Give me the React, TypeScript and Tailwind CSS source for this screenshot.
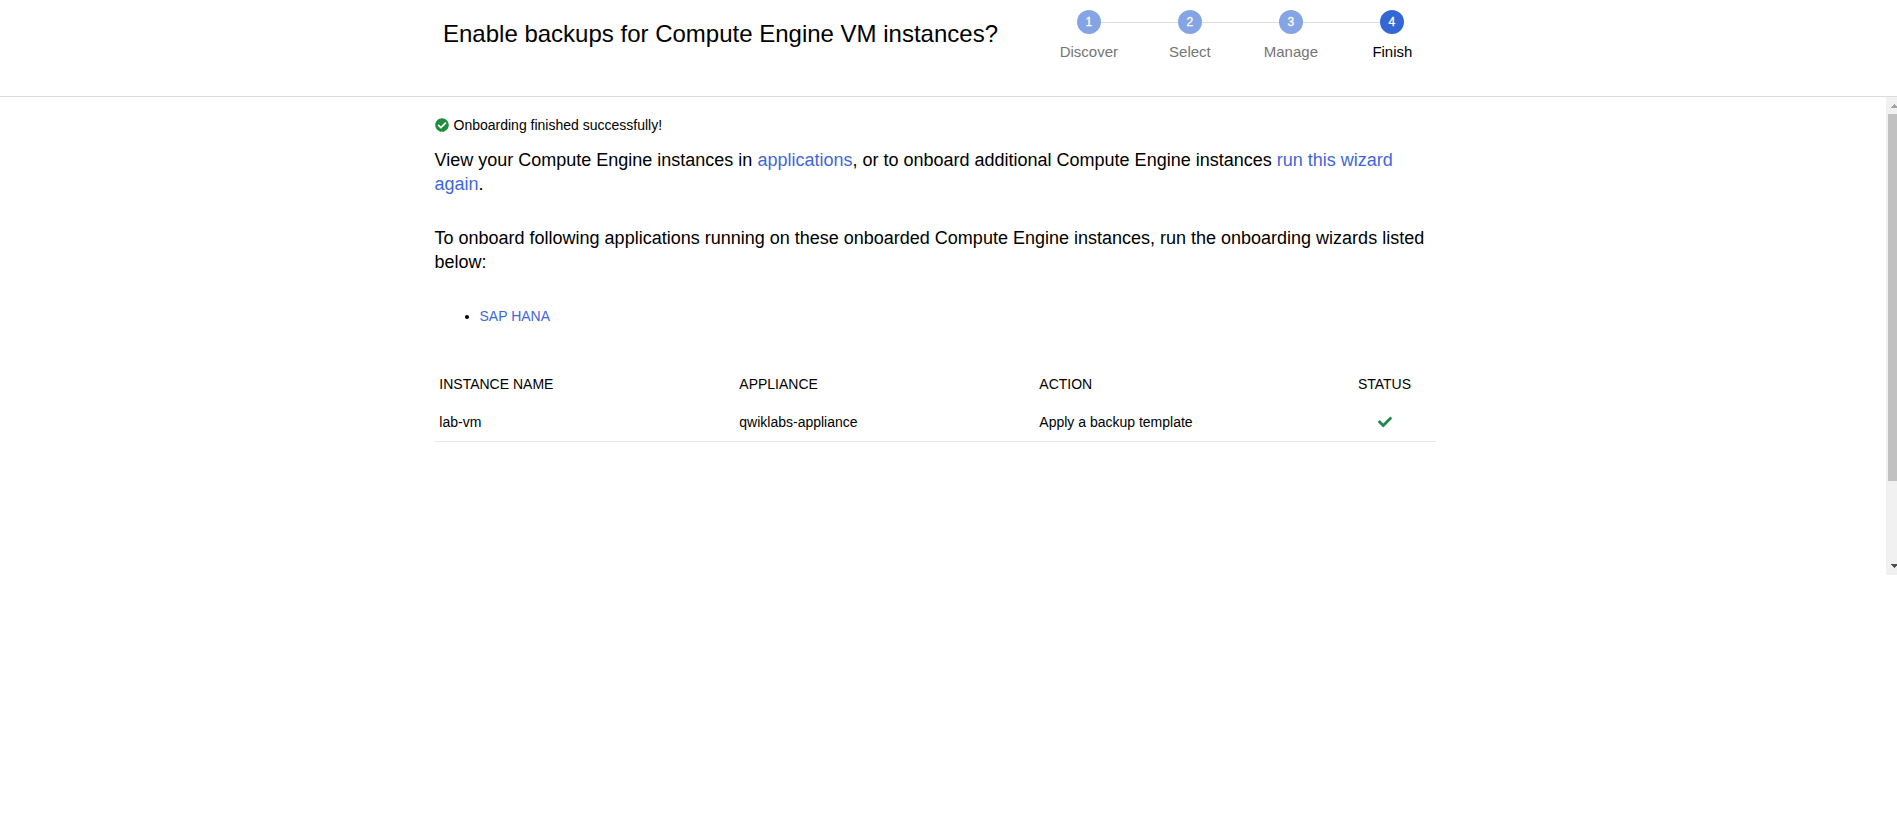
import { FaCheck, FaCheckCircle } from "react-icons/fa";

const steps = ["Discover", "Select", "Manage", "Finish"];

function Stepper() {
  return (
    <ol className="flex pt-[10px]">
      {steps.map((label, i) => {
        const active = i === steps.length - 1;
        return (
          <li key={label} className="flex w-[101px] flex-col items-center">
            <div className="flex h-6 w-full">
              <span className={i === 0 ? "flex-1" : "mt-[12px] h-px flex-1 bg-[#dcdcdc]"} />
              <span
                className={
                  active
                    ? "flex size-6 items-center justify-center rounded-full bg-[#3367d6] text-[12px] text-white [-webkit-text-stroke:0.3px_white]"
                    : "flex size-6 items-center justify-center rounded-full bg-[#85a4e6] text-[12px] text-white [-webkit-text-stroke:0.3px_white]"
                }
              >
                {i + 1}
              </span>
              <span className={active ? "flex-1" : "mt-[12px] h-px flex-1 bg-[#dcdcdc]"} />
            </div>
            <span
              className={
                active
                  ? "mt-[8px] pl-px text-[15px] leading-5 text-black"
                  : "mt-[8px] text-[15px] leading-5 text-[#757575]"
              }
            >
              {label}
            </span>
          </li>
        );
      })}
    </ol>
  );
}

function Scrollbar() {
  return (
    <div className="flex h-[478px] w-[11px] flex-col overflow-hidden bg-[#f1f1f1] pl-[2px]">
      <div className="h-[17px] pt-[7px] pl-[3px]">
        <svg className="block" width="8" height="4" viewBox="0 0 8 4" shapeRendering="crispEdges">
          <path d="M0 4V3H1V2H2V1H3V0H4V1H5V2H6V3H7V4Z" fill="#a3a3a3" />
        </svg>
      </div>
      <div className="h-[367px] bg-[#c1c1c1]" />
      <div className="pt-[83px] pl-[3px]">
        <svg className="block" width="8" height="4" viewBox="0 0 8 4" shapeRendering="crispEdges">
          <path d="M0 0H7V1H6V2H5V3H4V4H3V3H2V2H1V1H0Z" fill="#505050" />
        </svg>
      </div>
    </div>
  );
}

export default function App() {
  return (
    <div className="h-[835px] w-[1897px] overflow-hidden bg-white font-['Liberation_Sans',Arial,sans-serif] text-black">
      <header className="flex h-[97px] border-b border-[#dcdcdc] pl-[443px]">
        <h1 className="w-[595.4px] pt-[18px] text-[24px] leading-8 whitespace-nowrap">
          Enable backups for Compute Engine VM instances?
        </h1>
        <Stepper />
      </header>
      <div className="flex justify-between">
        <main className="ml-[434.5px] w-[1001px] pt-[18px]">
          <p className="flex h-5 items-center gap-[5px] text-[14px] leading-5">
            <FaCheckCircle className="size-[14px] text-[#1e8e3e]" />
            <span>Onboarding finished successfully!</span>
          </p>
          <p className="mt-[13px] text-[18px] leading-6">
            View your Compute Engine instances in{" "}
            <a className="text-[#3f67d8]">applications</a>, or to onboard additional Compute Engine instances{" "}
            <a className="text-[#3f67d8]">run this wizard<br />again</a>.
          </p>
          <p className="mt-[30px] text-[18px] leading-6">
            To onboard following applications running on these onboarded Compute Engine instances, run the onboarding wizards listed
            <br />
            below:
          </p>
          <ul className="mt-[32px] list-disc pl-[45.5px] text-[14px] leading-5">
            <li>
              <a className="-ml-[0.5px] text-[#3f67d8]">SAP HANA</a>
            </li>
          </ul>
          <table className="mt-[39px] w-[1001px] table-fixed text-left text-[14px] leading-5">
            <thead>
              <tr className="h-[38px]">
                <th className="w-[300px] pl-[4.8px] font-normal">INSTANCE NAME</th>
                <th className="w-[300px] pl-[4.8px] font-normal">APPLIANCE</th>
                <th className="w-[300px] pl-[4.8px] font-normal">ACTION</th>
                <th className="pr-px text-center font-normal">STATUS</th>
              </tr>
            </thead>
            <tbody>
              <tr className="h-[38px] border-b border-[#e8e8e8]">
                <td className="pl-[4.8px]">lab-vm</td>
                <td className="pl-[4.8px]">qwiklabs-appliance</td>
                <td className="pl-[4.8px]">Apply a backup template</td>
                <td className="pr-px">
                  <FaCheck className="mx-auto size-[14px] text-[#1f8a48]" />
                </td>
              </tr>
            </tbody>
          </table>
        </main>
        <Scrollbar />
      </div>
    </div>
  );
}
